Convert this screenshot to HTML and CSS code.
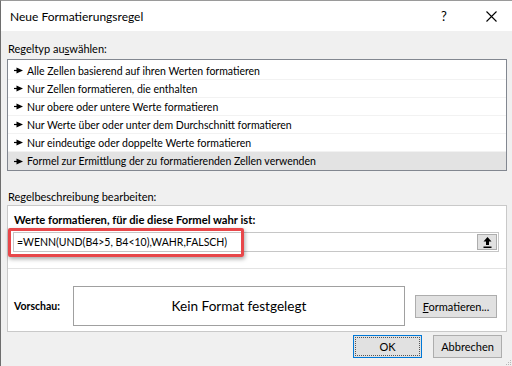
FILE: index.html
```html
<!DOCTYPE html>
<html lang="de">
<head>
    <meta charset="UTF-8">
    <title>Neue Formatierungsregel</title>
    <link rel="stylesheet" href="styles.css">
</head>
<body>
    <div class="dialog">
        <div class="titlebar">
            <span class="title">Neue Formatierungsregel</span>
            <span class="help">?</span>
            <span class="close">
                <svg width="11" height="11" viewBox="0 0 11 11"><path d="M0.5 0.5 L10.5 10.5 M10.5 0.5 L0.5 10.5" stroke="#000" stroke-width="1.1" fill="none"/></svg>
            </span>
        </div>

        <div class="content">
            <div class="group-label first">Regeltyp au<u>s</u>wählen:</div>
            <ul class="rule-list">
                <li><svg class="bullet" width="9" height="7" viewBox="0 0 9 7"><path d="M0 3.5 H3" stroke="#000" stroke-width="1.2"/><polygon points="2.5,0.5 9,3.5 2.5,6.5" fill="#000"/></svg>Alle Zellen basierend auf ihren Werten formatieren</li>
                <li><svg class="bullet" width="9" height="7" viewBox="0 0 9 7"><path d="M0 3.5 H3" stroke="#000" stroke-width="1.2"/><polygon points="2.5,0.5 9,3.5 2.5,6.5" fill="#000"/></svg>Nur Zellen formatieren, die enthalten</li>
                <li><svg class="bullet" width="9" height="7" viewBox="0 0 9 7"><path d="M0 3.5 H3" stroke="#000" stroke-width="1.2"/><polygon points="2.5,0.5 9,3.5 2.5,6.5" fill="#000"/></svg>Nur obere oder untere Werte formatieren</li>
                <li><svg class="bullet" width="9" height="7" viewBox="0 0 9 7"><path d="M0 3.5 H3" stroke="#000" stroke-width="1.2"/><polygon points="2.5,0.5 9,3.5 2.5,6.5" fill="#000"/></svg>Nur Werte über oder unter dem Durchschnitt formatieren</li>
                <li><svg class="bullet" width="9" height="7" viewBox="0 0 9 7"><path d="M0 3.5 H3" stroke="#000" stroke-width="1.2"/><polygon points="2.5,0.5 9,3.5 2.5,6.5" fill="#000"/></svg>Nur eindeutige oder doppelte Werte formatieren</li>
                <li class="selected"><svg class="bullet" width="9" height="7" viewBox="0 0 9 7"><path d="M0 3.5 H3" stroke="#000" stroke-width="1.2"/><polygon points="2.5,0.5 9,3.5 2.5,6.5" fill="#000"/></svg>Formel zur Ermittlung der zu formatierenden Zellen verwenden</li>
            </ul>

            <div class="group-label">Re<u>g</u>elbeschreibung bearbeiten:</div>
            <div class="panel">
                <div class="formula-head">Werte formatieren, für die diese Formel wahr ist:</div>
                <div class="formula-row">
                    <div class="formula-input">
                        <span class="formula-text">=WENN(UND(B4&gt;5, B4&lt;10),WAHR,FALSCH)</span>
                        <button class="collapse">
                            <svg width="9" height="11" viewBox="0 0 9 11"><polygon points="4.5,0 8.5,4.5 6,4.5 6,8 3,8 3,4.5 0.5,4.5" fill="#000"/><rect x="0.5" y="9.5" width="8" height="1.5" fill="#000"/></svg>
                        </button>
                    </div>
                    <div class="highlight"></div>
                </div>
                <div class="preview-row">
                    <span class="preview-label">Vorschau:</span>
                    <div class="preview-box">Kein Format festgelegt</div>
                    <button class="btn format-btn"><u>F</u>ormatieren...</button>
                </div>
            </div>

            <div class="actions">
                <button class="btn ok">OK</button>
                <button class="btn">Abbrechen</button>
            </div>
        </div>

        <svg class="grip" width="7" height="7" viewBox="0 0 7 7">
            <rect x="5" y="1" width="1" height="1" fill="#b8b8b8"/>
            <rect x="3" y="3" width="1" height="1" fill="#b8b8b8"/>
            <rect x="5" y="3" width="1" height="1" fill="#b8b8b8"/>
            <rect x="1" y="5" width="1" height="1" fill="#b8b8b8"/>
            <rect x="3" y="5" width="1" height="1" fill="#b8b8b8"/>
            <rect x="5" y="5" width="1" height="1" fill="#b8b8b8"/>
        </svg>
    </div>
</body>
</html>
```

FILE: styles.css
```css
body {
    margin: 0;
    padding: 0;
    background: #ffffff;
}

.dialog {
    position: relative;
    width: 512px;
    height: 366px;
    box-sizing: border-box;
    background: #f0f0f0;
    border-left: 1px solid #6e6e6e;
    border-top: 1px solid #9a9a9a;
    font-family: Lato, "Noto Sans", sans-serif;
    font-size: 10.5px;
    color: #000;
    overflow: hidden;
}

.titlebar {
    height: 30px;
    background: #ffffff;
    display: flex;
    align-items: center;
    padding-left: 9px;
}

.title {
    font-size: 12px;
}

.help {
    margin-left: auto;
    margin-right: 22px;
    width: 20px;
    text-align: center;
    font-size: 13px;
}

.close {
    width: 30px;
    margin-right: 6px;
    display: flex;
    justify-content: center;
}

.content {
    padding: 0 5px 0 6px;
}

.group-label {
    height: 16px;
    line-height: 16px;
    padding-left: 1px;
    margin-top: 18px;
    font-size: 11px;
    color: #000;
}

.group-label.first {
    margin-top: 10px;
    margin-bottom: 2px;
}

.rule-list {
    list-style: none;
    margin: 0;
    padding: 2px 0 0;
    background: #ffffff;
    border: 1px solid #828790;
}

.rule-list li {
    height: 18px;
    box-sizing: border-box;
    border-bottom: 1px solid #f2f2f2;
    display: flex;
    align-items: center;
    padding-left: 6px;
    gap: 4px;
}

.rule-list li.selected {
    background: #e3e3e3;
    border-bottom: none;
}

.bullet {
    flex-shrink: 0;
}

.panel {
    background: #ffffff;
    border: 1px solid #c9c9c9;
}

.formula-head {
    font-weight: bold;
    font-size: 11.2px;
    line-height: 16px;
    padding: 6px 0 0 6px;
}

.formula-row {
    position: relative;
    margin: 4px 7px 0 5px;
}

.formula-input {
    height: 20px;
    box-sizing: border-box;
    border: 1px solid #c6c6c6;
    display: flex;
    align-items: center;
    padding-left: 3px;
}

.formula-text {
    flex: 1;
    font-size: 10.5px;
}

.collapse {
    width: 20px;
    height: 16px;
    margin-right: 1px;
    padding: 0;
    border: 1px solid #adadad;
    background: #e1e1e1;
    display: flex;
    align-items: center;
    justify-content: center;
}

.highlight {
    position: absolute;
    left: -5px;
    top: -4px;
    width: 236px;
    height: 29px;
    box-sizing: border-box;
    border: 3px solid #e8474a;
    border-radius: 2px;
    box-shadow: 1px 2px 4px rgba(0, 0, 0, 0.35);
}

.preview-row {
    margin-top: 16px;
    border-top: 1px solid #e3e3e3;
    display: flex;
    align-items: center;
    padding: 17px 0 5px 6px;
}

.preview-label {
    width: 59px;
    font-weight: bold;
}

.preview-box {
    width: 332px;
    height: 40px;
    box-sizing: border-box;
    border: 1px solid #a0a0a0;
    display: flex;
    align-items: center;
    justify-content: center;
    font-size: 13.6px;
}

.btn {
    font-family: Lato, "Noto Sans", sans-serif;
    font-size: 11px;
    color: #000;
    background: #e1e1e1;
    border: 1px solid #adadad;
    padding: 0;
    height: 23px;
}

.format-btn {
    width: 82px;
    margin-left: 10px;
}

.actions {
    display: flex;
    justify-content: flex-end;
    gap: 11px;
    margin-top: 3px;
    padding-right: 5px;
}

.actions .btn {
    width: 69px;
}

.ok {
    border-color: #0078d7;
    outline: 1px dotted #555;
    outline-offset: -3px;
}

.grip {
    position: absolute;
    right: 0;
    bottom: 0;
}
```
